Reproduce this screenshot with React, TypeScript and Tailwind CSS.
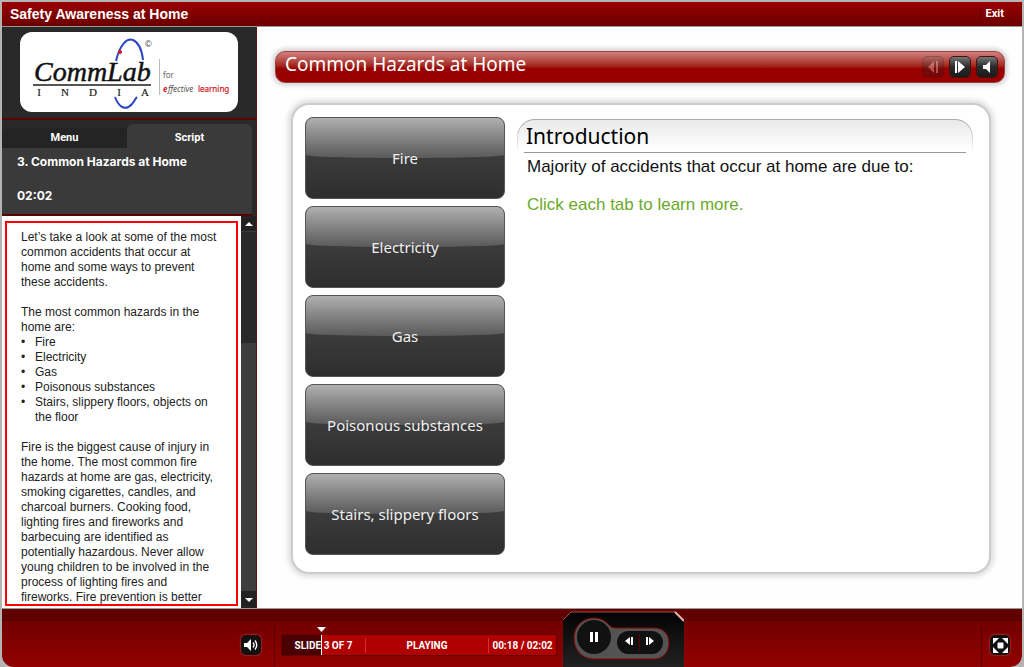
import { useState } from "react";

const tabs = [
  "Fire",
  "Electricity",
  "Gas",
  "Poisonous substances",
  "Stairs, slippery floors",
];

const hazards = [
  ["Fire"],
  ["Electricity"],
  ["Gas"],
  ["Poisonous substances"],
  ["Stairs, slippery floors, objects on", "the floor"],
];

const intro = [
  "Let’s take a look at some of the most",
  "common accidents that occur at",
  "home and some ways to prevent",
  "these accidents.",
];

const fire = [
  "Fire is the biggest cause of injury in",
  "the home. The most common fire",
  "hazards at home are gas, electricity,",
  "smoking cigarettes, candles, and",
  "charcoal burners. Cooking food,",
  "lighting fires and fireworks and",
  "barbecuing are identified as",
  "potentially hazardous. Never allow",
  "young children to be involved in the",
  "process of lighting fires and",
  "fireworks. Fire prevention is better",
];

const elapsed = 18;
const duration = 122;

function Lines({ lines }: { lines: string[] }) {
  return (
    <p className="whitespace-nowrap">
      {lines.map((line) => (
        <span key={line} className="block">
          {line}
        </span>
      ))}
    </p>
  );
}

function Logo() {
  return (
    <svg width="218" height="80" viewBox="0 0 218 80" role="img" aria-label="CommLab India">
      <path d="M96 29C100 12 107 6 113 8C120 11 122 19 123 28" fill="none" stroke="#2c46c8" strokeWidth="2" />
      <path d="M95 65C99 76 106 79 112 72C114 70 115 67 117 65" fill="none" stroke="#2c46c8" strokeWidth="2" />
      <circle cx="100" cy="20" r="2" fill="#d01820" />
      <text x="14" y="49" fontFamily="Liberation Serif, serif" fontStyle="italic" fontSize="28" fill="#111" stroke="#111" strokeWidth="0.5">
        CommLab
      </text>
      <path d="M13 53H131" stroke="#555" strokeWidth="2" />
      <g fontFamily="Liberation Serif, serif" fontSize="11" fill="#222" stroke="#222" strokeWidth="0.2" textAnchor="middle">
        <text x="19" y="64">I</text>
        <text x="45" y="64">N</text>
        <text x="73" y="64">D</text>
        <text x="99" y="64">I</text>
        <text x="125" y="64">A</text>
      </g>
      <text x="125" y="15" fontFamily="Liberation Sans, sans-serif" fontSize="9" fill="#333">©</text>
      <path d="M139.500 27V63" stroke="#bbb" strokeWidth="1" />
      <g fontFamily="Noto Sans, sans-serif" fontSize="8">
        <text x="143" y="46" fill="#666">for</text>
        <text x="143" y="60" fill="#d01820" fontWeight="700" fontStyle="italic">e</text>
        <text x="148" y="60" fill="#555" fontStyle="italic">ffective</text>
        <text x="178" y="60" fill="#d01820" stroke="#d01820" strokeWidth="0.2">learning</text>
      </g>
    </svg>
  );
}

function VolumeIcon() {
  return (
    <svg width="16" height="14" viewBox="0 0 16 14">
      <path d="M1 5H4L8 1V13L4 9H1Z" fill="#fff" />
      <path d="M10 4.500Q12 7 10 9.500M12 2.500Q15.500 7 12 11.500" fill="none" stroke="#fff" strokeWidth="1.400" />
    </svg>
  );
}

function FullscreenIcon() {
  return (
    <svg width="17" height="17" viewBox="0 0 17 17" fill="#fff">
      <path d="M1 1H7L1 7ZM10 1H16V7ZM1 10V16H7ZM16 10V16H10Z" />
      <circle cx="8.500" cy="8.500" r="5" fill="#111" />
      <rect x="5.500" y="5.500" width="6" height="6" rx="1" />
    </svg>
  );
}

function Sidebar() {
  return (
    <aside className="flex w-[255px] shrink-0 flex-col border-r border-[#6a1010] bg-[#292929]">
      <div className="flex h-[93px] shrink-0 justify-center border-b-2 border-[#5c0000] pt-[5px]">
        <div className="h-20 rounded-xl bg-white">
          <Logo />
        </div>
      </div>

      <div
        role="tablist"
        className="mt-1 flex shrink-0 items-end pr-1 font-['Roboto',sans-serif] text-[11px] font-bold text-white"
      >
        <button role="tab" aria-selected={false} className="h-5 flex-1 rounded-tl-md bg-[#242424]">
          Menu
        </button>
        <button role="tab" aria-selected className="h-6 flex-1 rounded-t-md bg-[#3a3a3a] pt-1">
          Script
        </button>
      </div>

      <div className="mr-1 h-[68px] shrink-0 border-b-2 border-[#5c0000] bg-[#3a3a3a] pl-[15px] pt-[5px] font-['Inter',sans-serif] text-[12px] font-bold leading-[18px] text-white">
        <h2>3. Common Hazards at Home</h2>
        <p className="mt-4">02:02</p>
      </div>

      <div className="flex min-h-0 flex-1">
        <div className="min-w-0 flex-1 bg-white px-[3px] pb-[2px] pt-[5px]">
          <div className="h-full overflow-hidden border-2 border-[#ff0000] pl-[14px] pt-[7px] font-['Liberation_Sans',sans-serif] text-[12px] leading-[15px] text-[#222]">
            <Lines lines={intro} />
            <div className="mt-[15px]">
              <Lines lines={["The most common hazards in the", "home are:"]} />
            </div>
            <ul>
              {hazards.map((item) => (
                <li key={item[0]} className="flex">
                  <span className="w-[14px]">•</span>
                  <Lines lines={item} />
                </li>
              ))}
            </ul>
            <div className="mt-[15px]">
              <Lines lines={fire} />
            </div>
          </div>
        </div>
        <div className="flex w-[15px] flex-col bg-[#3d3d3d]">
          <button aria-label="Scroll up" className="flex h-[15px] items-center justify-center bg-[#222]">
            <svg width="8" height="4"><path d="M0 4L4 0L8 4Z" fill="#fff" /></svg>
          </button>
          <div className="h-28 border-t border-[#3a3a3a] bg-[#292929]" />
          <div className="flex-1" />
          <button aria-label="Scroll down" className="flex h-[17px] items-center justify-center bg-[#222]">
            <svg width="8" height="4"><path d="M0 0H8L4 4Z" fill="#fff" /></svg>
          </button>
        </div>
      </div>
    </aside>
  );
}

function Slide() {
  const [active, setActive] = useState("");

  const navButton =
    "flex size-[22px] items-center justify-center rounded-[5px] border border-[#4a1010] bg-linear-to-b from-[#777] via-[#2a2a2a] via-50% to-[#1a1a1a]";

  return (
    <main className="min-w-0 flex-1 bg-[#fefefe] pl-[18px] pr-[17px] pt-6">
      <div className="flex h-8 items-center justify-between rounded-[10px] border border-[#a04040] bg-linear-to-b from-[#d08080] via-[#990000] via-55% to-[#990000] pl-[9px] pr-[6px] shadow-[0_0_5px_2px_#ccc]">
        <h1 className="pb-1.5 font-['Noto_Sans',sans-serif] text-[19px] leading-6 text-white">
          Common Hazards at Home
        </h1>
        <div className="flex gap-[5px]">
          <button aria-label="Previous" disabled className={`${navButton} opacity-30`}>
            <svg width="12" height="14" fill="#fff"><path d="M7 1V13L1 7ZM9 1H11V13H9Z" /></svg>
          </button>
          <button aria-label="Next" className={navButton}>
            <svg width="12" height="14" fill="#fff"><path d="M1 1H3V13H1ZM4 1L11 7L4 13Z" /></svg>
          </button>
          <button aria-label="Sound" className={navButton}>
            <svg width="10" height="14" fill="#fff"><path d="M1 5H4L8 1V13L4 9H1Z" /></svg>
          </button>
        </div>
      </div>

      <div className="ml-4 mr-[14px] mt-5 flex gap-3 rounded-[18px] border-2 border-[#ccc] bg-white px-3 pb-[17px] pt-3 shadow-[0_0_5px_3px_#ddd]">
        <div className="flex w-[200px] shrink-0 flex-col gap-[7px]">
          {tabs.map((tab) => (
            <button
              key={tab}
              onClick={() => setActive(tab)}
              aria-pressed={active === tab}
              className="relative h-[82px] overflow-hidden rounded-lg border border-[#555] bg-linear-to-b from-[#484848] to-[#2e2e2e] font-['Noto_Sans',sans-serif] text-[15px] text-[#f0f0f0]"
            >
              <span className="absolute inset-x-0 top-0 h-10 rounded-b-[50%_3px] bg-linear-to-b from-[#b0b0b0] to-[#5a5a5a]" />
              <span className="relative">{tab}</span>
            </button>
          ))}
        </div>

        <section className="mr-1 min-w-0 flex-1 pt-[2px] font-['Liberation_Sans',sans-serif] text-[17px] leading-5">
          <div className="rounded-t-[18px] bg-linear-to-b from-[#aaa] to-white px-px pt-px">
            <div className="rounded-t-[17px] bg-linear-to-b from-[#e9e9e9] to-white to-90% px-[6px]">
              <h2 className="border-b border-[#999] pl-[2px] font-['Noto_Sans',sans-serif] text-[21px] leading-8 text-black">
                Introduction
              </h2>
            </div>
          </div>
          <p className="mt-1 pl-[10px] text-[#111]">
            Majority of accidents that occur at home are due to:
          </p>
          <p className="mt-[18px] pl-[10px] text-[#6aaa28]">Click each tab to learn more.</p>
        </section>
      </div>
    </main>
  );
}

function Controls() {
  return (
    <div className="relative mt-[2px] h-[57px] w-[121px] shrink-0">
      <svg className="absolute inset-0" width="121" height="57" viewBox="0 0 121 57">
        <defs>
          <linearGradient id="dock" x1="0" y1="0" x2="0" y2="1">
            <stop offset="0" stopColor="#030303" />
            <stop offset="1" stopColor="#222" />
          </linearGradient>
        </defs>
        <path d="M0 57V9L8 1H112L121 10V57Z" fill="url(#dock)" />
        <path d="M0 9L8 1H112" fill="none" stroke="#a05050" />
        <path d="M112 1L121 10" stroke="#e8b0b0" strokeWidth="2" />
        <path
          d="M31 7C39 7 43 11 47 15C49 17 51 17 54 17H91C101 17 106 24 106 32S101 48 91 48H31C18 48 11 38 11 27S19 7 31 7Z"
          fill="#535353"
          stroke="#8c0000"
        />
        <rect x="54" y="20" width="46" height="23" rx="11.500" fill="#111" />
        <path d="M76.500 23V40" stroke="#5c0000" />
      </svg>
      <div className="relative flex items-center pl-[14px] pt-[9px]">
        <button aria-label="Pause" className="flex size-[34px] items-center justify-center rounded-full bg-[#111]">
          <svg width="8" height="10" fill="#fff"><path d="M0 0H3V10H0ZM5 0H8V10H5Z" /></svg>
        </button>
        <button aria-label="Previous slide" className="ml-2 mt-2 flex w-5 justify-center">
          <svg width="9" height="8" fill="#fff"><path d="M5 0V8L0 4ZM6 0H8V8H6Z" /></svg>
        </button>
        <button aria-label="Next slide" className="mt-2 flex w-5 justify-center">
          <svg width="9" height="8" fill="#fff"><path d="M1 0H3V8H1ZM4 0L9 4L4 8Z" /></svg>
        </button>
      </div>
    </div>
  );
}

function PlayerBar() {
  const roundButton =
    "flex size-5 items-center justify-center rounded-[5px] bg-[#111] shadow-[0_0_1px_1px_#a02020]";

  return (
    <footer className="flex h-[59px] shrink-0 overflow-hidden rounded-b-xl border-t border-[#999] bg-[linear-gradient(to_bottom,#620000_0px,#620000_10px,#480000_11px,#720000_12px,#920000_58px)] font-['Roboto',sans-serif]">
      <div className="mt-3 flex w-[273px] shrink-0 justify-end border-r border-[#5c0000] pr-[13px] pt-[14px]">
        <button aria-label="Volume" className={roundButton}>
          <VolumeIcon />
        </button>
      </div>

      <div className="mt-3 w-72 shrink-0 px-[7px] pt-[14px]">
        <div className="relative flex h-5 items-center bg-[#b00000] text-[10px] font-bold text-white shadow-[0_0_0_1px_#680000]">
          <div
            className="absolute inset-y-0 left-0 border-r border-white bg-[#4a0000]"
            style={{ width: `${(elapsed / duration) * 100}%` }}
          >
            <svg className="absolute -right-[5px] -top-2" width="9" height="5">
              <path d="M0 0H9L4.500 5Z" fill="#fff" />
            </svg>
          </div>
          <span className="relative w-[83px] text-center">SLIDE 3 OF 7</span>
          <span className="relative flex-1 border-x border-[#d03030] text-center">PLAYING</span>
          <span className="relative w-[67px] text-center">00:18 / 02:02</span>
        </div>
      </div>

      <Controls />

      <div className="mt-3 flex-1 border-r border-[#5c0000]" />
      <div className="mt-3 w-10 shrink-0 pl-2 pt-[14px]">
        <button aria-label="Full screen" className={roundButton}>
          <FullscreenIcon />
        </button>
      </div>
    </footer>
  );
}

export default function App() {
  return (
    <div className="flex h-screen flex-col bg-[#b4b4b4] px-[2px] pt-[2px]">
      <header className="flex h-[25px] shrink-0 items-center justify-between border-b border-[#999] bg-linear-to-b from-[#980000] to-[#6c0000] pl-2 pr-[18px] text-white">
        <span className="font-['Liberation_Sans',sans-serif] text-[14px] font-bold">
          Safety Awareness at Home
        </span>
        <button className="border-l border-[#5c0000] pl-[5px] font-['Roboto',sans-serif] text-[11px] font-bold leading-3">
          Exit
        </button>
      </header>
      <div className="flex min-h-0 flex-1">
        <Sidebar />
        <Slide />
      </div>
      <PlayerBar />
    </div>
  );
}
